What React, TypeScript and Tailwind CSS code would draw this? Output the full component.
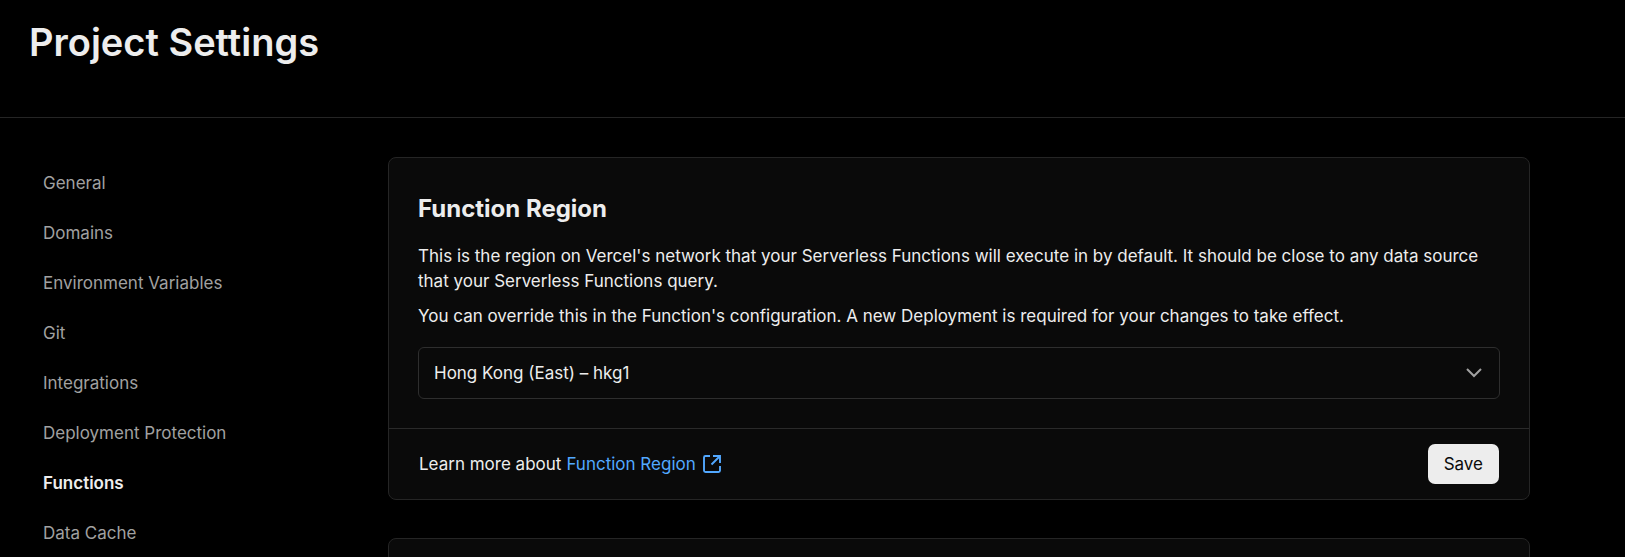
import React from "react";

const links = [
  "General",
  "Domains",
  "Environment Variables",
  "Git",
  "Integrations",
  "Deployment Protection",
  "Functions",
  "Data Cache",
];

function ExternalIcon() {
  return (
    <svg
      className="size-5 shrink-0"
      viewBox="0 0 20 20"
      fill="none"
      stroke="currentColor"
      strokeWidth="1.9"
      aria-hidden="true"
    >
      <path d="M8 2H3.5A1.5 1.5 0 0 0 2 3.500v13A1.500 1.500 0 0 0 3.500 18h13a1.500 1.500 0 0 0 1.500-1.500V12" />
      <path d="M11 2h7v7M18 2l-8.5 8.500" />
    </svg>
  );
}

function ChevronDown() {
  return (
    <svg
      className="pointer-events-none absolute top-1/2 right-4 size-5 -translate-y-1/2 text-[#a1a1a1]"
      viewBox="0 0 20 20"
      fill="none"
      stroke="currentColor"
      strokeWidth="2"
      aria-hidden="true"
    >
      <path d="M3 6l7 7 7-7" />
    </svg>
  );
}

export default function App() {
  return (
    <div className="h-screen overflow-hidden bg-black font-['Inter',sans-serif] text-[17px] leading-[25px] text-[#ededed]">
      <header className="border-b border-[#252525] px-[29px] pt-[17px] pb-[50px]">
        <h1 className="text-[38px] leading-[50px] font-semibold">Project Settings</h1>
      </header>
      <div className="flex items-start gap-[30px] pt-[39px] pr-[95px] pl-[29px]">
        <nav aria-label="Project settings" className="w-[329px] shrink-0 pt-px">
          <ul>
            {links.map((name) => (
              <li key={name}>
                <a
                  href="#"
                  aria-current={name === "Functions" ? "page" : undefined}
                  className="flex h-[50px] items-center px-[14px] text-[#a1a1a1] aria-[current=page]:font-semibold aria-[current=page]:text-[#ededed]"
                >
                  {name}
                </a>
              </li>
            ))}
          </ul>
        </nav>
        <main className="flex min-w-0 flex-1 flex-col gap-[38px]">
          <section className="rounded-lg border border-[#252525] bg-[#0a0a0a]">
            <div className="px-[29px] pt-[31px] pb-[29px]">
              <h2 className="text-[24px] leading-[40px] font-bold">Function Region</h2>
              <p className="mt-[15px]">
                This is the region on Vercel's network that your Serverless Functions will execute in by
                default. It should be close to any data source that your Serverless Functions query.
              </p>
              <p className="mt-[10px]">
                You can override this in the Function's configuration. A new Deployment is required for your
                changes to take effect.
              </p>
              <div className="relative mt-[18px]">
                <select
                  aria-label="Function region"
                  className="h-[52px] w-full appearance-none rounded-md border border-[#2e2e2e] bg-[#0a0a0a] px-[15px] text-[#ededed]"
                >
                  <option>Hong Kong (East) – hkg1</option>
                </select>
                <ChevronDown />
              </div>
            </div>
            <footer className="flex items-center justify-between border-t border-[#2a2a2a] px-[30px] py-[15px]">
              <p className="flex items-center gap-[5px]">
                Learn more about
                <a href="#" className="flex items-center gap-[6px] text-[#52a8ff]">
                  Function Region
                  <ExternalIcon />
                </a>
              </p>
              <button
                type="button"
                className="h-[40px] rounded-[7px] bg-[#ededed] px-[16px] text-[#0a0a0a]"
              >
                Save
              </button>
            </footer>
          </section>
          <section className="h-[343px] rounded-lg border border-[#252525] bg-[#0a0a0a]" />
        </main>
      </div>
    </div>
  );
}
